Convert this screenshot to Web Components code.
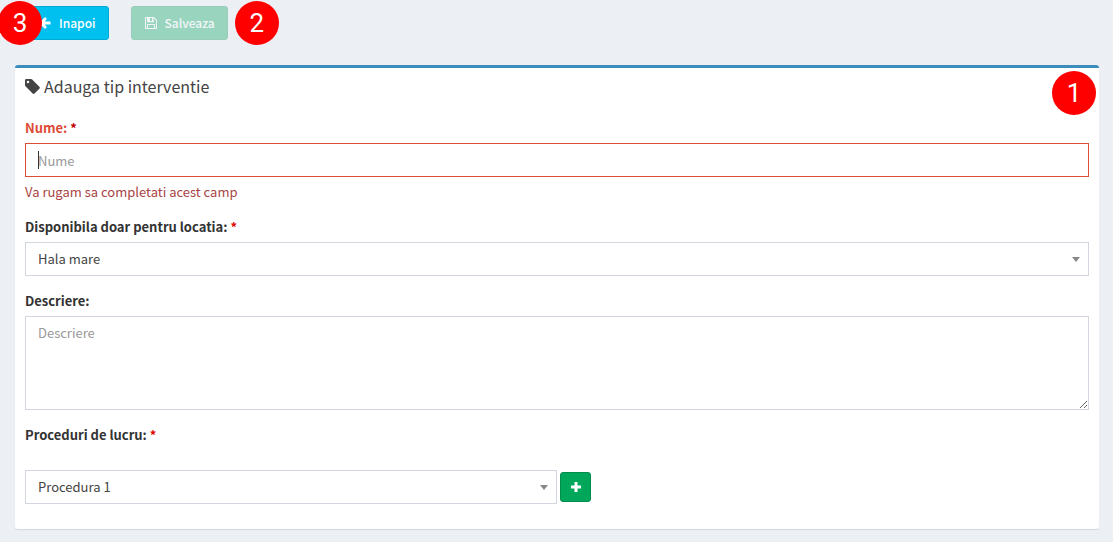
<!DOCTYPE html>
<html lang="ro">
<head>
<meta charset="utf-8">
<meta name="viewport" content="width=device-width, initial-scale=1">
<title>Adauga tip interventie</title>
<style>
  body {
    margin: 0;
    background: #ecf0f5;
    color: #333;
    font-family: "Noto Sans CJK SC", "Noto Sans", sans-serif;
    font-size: 13px;
    line-height: 20px;
  }
</style>
</head>
<body>
<intervention-page></intervention-page>

<script>
const ICONS = {
  back: '<path d="M7 1 8.900 2.900 6.700 5.500H12.500v3H6.700l2.200 2.600L7 13 1 7z"/>',
  save: '<path fill-rule="evenodd" d="M1.500 1H10l3 3v8.500a.5.5 0 0 1-.5.5h-11a.5.5 0 0 1-.5-.5v-11a.5.5 0 0 1 .5-.5zM2 2v10h1V8h8v4h1V4.400L9.600 2H9.500v4H3V2zm4 0v3h2V2zM4 9v3h6V9z"/><path d="M3 5h7v1.200H3zM3 2h1v4H3z"/>',
  tag: '<path fill-rule="evenodd" d="M0 1.200Q0 0 1.200 0H5.500q.7 0 1.200.5l6.700 6.700q.9.900 0 1.800l-4.500 4.500q-.9.900-1.800 0L.5 6.700Q0 6.200 0 5.500zM2.800 1.600a1.200 1.200 0 1 0 0 2.400 1.200 1.200 0 0 0 0-2.400z"/>',
  plus: '<path d="M5.500 2h3v3.500H12v3H8.500V12h-3V8.500H2v-3h3.500z"/>'
};

/**
 * UiIcon component
 * @customElement
 * @attr name - Icon name (back, save, tag, plus)
 */
class UiIcon extends HTMLElement {
  connectedCallback() {
    if (this.shadowRoot) return;
    this.attachShadow({ mode: 'open' }).innerHTML = `
      <style>
        :host { display: inline-flex; flex: none; width: 14px; height: 14px; }
        svg { width: 100%; height: 100%; fill: currentColor; }
      </style>
      <svg viewBox="0 0 14 14" aria-hidden="true">${ICONS[this.getAttribute('name')]}</svg>
    `;
  }
}

/**
 * UiButton component
 * @customElement
 * @slot - Caption of the button
 * @attr variant - info or success
 * @attr icon - Icon name
 * @attr small - Square icon-only button
 * @attr disabled - Whether the button is disabled
 * @attr label - Accessible label for icon-only buttons
 */
class UiButton extends HTMLElement {
  connectedCallback() {
    if (this.shadowRoot) return;
    const label = this.getAttribute('label');
    this.attachShadow({ mode: 'open' }).innerHTML = `
      <style>
        :host { display: block; --btn-bg: #00c0ef; --btn-border: #00acd6; }
        :host([variant="success"]) { --btn-bg: #00a65a; --btn-border: #008d4c; }
        button {
          display: flex;
          align-items: center;
          gap: 7px;
          height: 34px;
          padding: 0 12px;
          border: 1px solid var(--btn-border);
          border-radius: 3px;
          background: var(--btn-bg);
          color: #fff;
          font: inherit;
          font-size: 12px;
          font-weight: 500;
          cursor: pointer;
        }
        :host([small]) button { justify-content: center; width: 31px; height: 30px; padding: 0; }
        button:disabled { opacity: 0.35; cursor: not-allowed; }
      </style>
      <button type="button" ${label ? `aria-label="${label}"` : ''} ${this.hasAttribute('disabled') ? 'disabled' : ''}>
        <ui-icon name="${this.getAttribute('icon')}"></ui-icon>
        <slot></slot>
      </button>
    `;
  }
}

/**
 * StepBadge component, numbered marker laid over its positioned parent
 * @customElement
 * @slot - Step number
 */
class StepBadge extends HTMLElement {
  connectedCallback() {
    if (this.shadowRoot) return;
    this.attachShadow({ mode: 'open' }).innerHTML = `
      <style>
        :host {
          position: absolute;
          display: flex;
          align-items: center;
          justify-content: center;
          width: 44px;
          height: 44px;
          border-radius: 50%;
          background: #f00;
          color: #fff;
          font: 26px/44px Roboto, Arial, sans-serif;
        }
      </style>
      <slot></slot>
    `;
  }
}

/**
 * FormField component
 * @customElement
 *
 * Attributes:
 * @attr type - text, select or textarea
 * @attr label - Label of the field
 * @attr placeholder - Placeholder text
 * @attr value - Selected option, for a select
 * @attr required - Shows the required mark
 * @attr error - Validation message
 */
class FormField extends HTMLElement {
  connectedCallback() {
    if (this.shadowRoot) return;
    this.attachShadow({ mode: 'open' }).innerHTML = `
      <style>
        :host { display: block; --field-border: #d2d6de; }
        :host([error]) { --field-border: #dd4b39; }
        label { display: block; margin-bottom: 5px; font-weight: 700; }
        :host([error]) label { color: #dd4b39; }
        .required { color: #e00000; }
        :host([error]) .required { color: #c00000; }
        input, select, textarea {
          display: block;
          box-sizing: border-box;
          width: 100%;
          height: 34px;
          margin: 0;
          padding: 6px 12px;
          border: 1px solid var(--field-border);
          border-radius: 0;
          outline: none;
          background: #fff;
          color: #444;
          font: inherit;
        }
        textarea { height: 94px; resize: vertical; }
        select { appearance: none; padding: 0 30px 0 12px; }
        ::placeholder { color: #999; opacity: 1; }
        :host([error]) input {
          background: linear-gradient(#333, #333) 12px center / 1px 18px no-repeat #fff;
        }
        .row { display: flex; align-items: center; gap: 3px; }
        .control { position: relative; flex: 1; }
        :host([spaced]) .row { margin-top: 25px; }
        :host([half]) .control { flex: none; width: 50%; }
        .arrow {
          position: absolute;
          top: 15px;
          right: 9px;
          border: 4px solid transparent;
          border-top: 5px solid #888;
          border-bottom: 0;
          pointer-events: none;
        }
        .help { margin: 5px 0 0; color: #a94442; }
      </style>
      <label for="control">${this.getAttribute('label')}${this.hasAttribute('required') ? ' <span class="required">*</span>' : ''}</label>
      <div class="row">
        <div class="control">${this._control()}</div>
        <slot></slot>
      </div>
      ${this.hasAttribute('error') ? `<p class="help">${this.getAttribute('error')}</p>` : ''}
    `;
  }

  _control() {
    const placeholder = this.getAttribute('placeholder');
    switch (this.getAttribute('type')) {
      case 'select':
        return `<select id="control"><option>${this.getAttribute('value')}</option></select><span class="arrow"></span>`;
      case 'textarea':
        return `<textarea id="control" placeholder="${placeholder}"></textarea>`;
      default:
        return `<input id="control" type="text" placeholder="${placeholder}">`;
    }
  }
}

/**
 * BoxPanel component
 * @customElement
 * @slot - Fields of the box
 * @slot badge - Marker shown over the corner
 * @attr heading - Title of the box
 * @attr icon - Icon in front of the title
 */
class BoxPanel extends HTMLElement {
  connectedCallback() {
    if (this.shadowRoot) return;
    this.attachShadow({ mode: 'open' }).innerHTML = `
      <style>
        :host {
          display: block;
          position: relative;
          border-top: 3px solid #3c8dbc;
          border-radius: 3px;
          background: #fff;
          box-shadow: 0 1px 1px rgba(0, 0, 0, 0.1);
        }
        header { display: flex; align-items: center; gap: 4px; padding: 8px 10px 10px; color: #444; }
        header ui-icon { width: 15px; height: 15px; }
        h3 { margin: 0; font-size: 16px; font-weight: 400; line-height: 20px; }
        .body { display: grid; gap: 15px; padding: 12px 10px 25px; }
      </style>
      <header>
        <ui-icon name="${this.getAttribute('icon')}"></ui-icon>
        <h3>${this.getAttribute('heading')}</h3>
      </header>
      <div class="body"><slot></slot></div>
      <slot name="badge"></slot>
    `;
  }
}

class InterventionPage extends HTMLElement {
  connectedCallback() {
    if (this.shadowRoot) return;
    this.attachShadow({ mode: 'open' }).innerHTML = `
      <style>
        :host { display: block; padding: 6px 14px 12px 15px; }
        nav { display: flex; gap: 22px; margin-bottom: 25px; padding-left: 10px; }
        .action { position: relative; }
        .back step-badge { top: -5px; left: -27px; }
        .save step-badge { top: -5px; left: calc(100% + 7px); }
        box-panel step-badge { top: 3px; right: 3px; }
      </style>
      <nav>
        <div class="action back">
          <ui-button variant="info" icon="back">Inapoi</ui-button>
          <step-badge>3</step-badge>
        </div>
        <div class="action save">
          <ui-button variant="success" icon="save" disabled>Salveaza</ui-button>
          <step-badge>2</step-badge>
        </div>
      </nav>
      <box-panel heading="Adauga tip interventie" icon="tag">
        <form-field type="text" label="Nume:" placeholder="Nume" required error="Va rugam sa completati acest camp"></form-field>
        <form-field type="select" label="Disponibila doar pentru locatia:" value="Hala mare" required></form-field>
        <form-field type="textarea" label="Descriere:" placeholder="Descriere"></form-field>
        <form-field type="select" label="Proceduri de lucru:" value="Procedura 1" required half spaced>
          <ui-button variant="success" icon="plus" label="Adauga procedura" small></ui-button>
        </form-field>
        <step-badge slot="badge">1</step-badge>
      </box-panel>
    `;
  }
}

customElements.define('ui-icon', UiIcon);
customElements.define('ui-button', UiButton);
customElements.define('step-badge', StepBadge);
customElements.define('form-field', FormField);
customElements.define('box-panel', BoxPanel);
customElements.define('intervention-page', InterventionPage);
</script>
</body>
</html>
